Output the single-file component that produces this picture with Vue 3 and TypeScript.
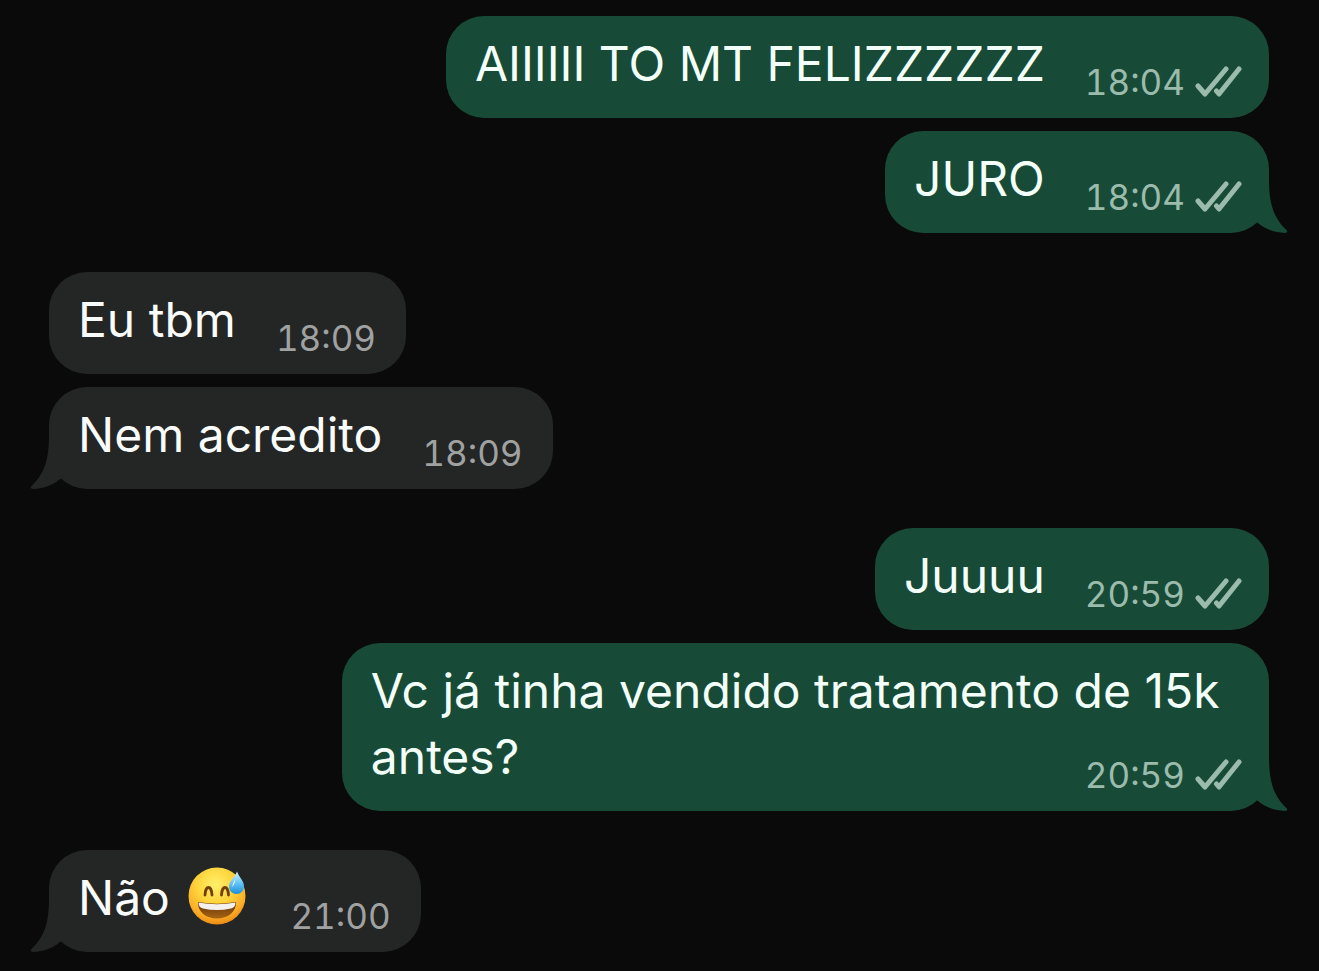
<script setup lang="ts">
interface Message {
  id: number
  text: string
  time: string
  outgoing: boolean
  tail: boolean
  emoji?: boolean
}

const groups: Message[][] = [
  [
    { id: 1, text: 'AIIIIII TO MT FELIZZZZZZ', time: '18:04', outgoing: true, tail: false },
    { id: 2, text: 'JURO', time: '18:04', outgoing: true, tail: true },
  ],
  [
    { id: 3, text: 'Eu tbm', time: '18:09', outgoing: false, tail: false },
    { id: 4, text: 'Nem acredito', time: '18:09', outgoing: false, tail: true },
  ],
  [
    { id: 5, text: 'Juuuu', time: '20:59', outgoing: true, tail: false },
    { id: 6, text: 'Vc já tinha vendido tratamento de 15k antes?', time: '20:59', outgoing: true, tail: true },
  ],
  [{ id: 7, text: 'Não', time: '21:00', outgoing: false, tail: true, emoji: true }],
]
</script>

<template>
  <main class="chat">
    <section v-for="(group, index) in groups" :key="index" class="group">
      <article
        v-for="message in group"
        :key="message.id"
        class="bubble"
        :class="message.outgoing ? 'outgoing' : 'incoming'"
      >
        <span class="text">{{ message.text }}</span>
        <template v-if="message.emoji">
          {{ ' ' }}
          <svg class="emoji" viewBox="0 0 58 58" role="img" aria-label="Rosto sorridente com gota de suor">
            <defs>
              <radialGradient id="face" cx="0.47" cy="0.3" r="0.72">
                <stop offset="0" stop-color="#fff06a" />
                <stop offset="0.45" stop-color="#ffd43c" />
                <stop offset="0.8" stop-color="#fbac25" />
                <stop offset="1" stop-color="#e98612" />
              </radialGradient>
              <linearGradient id="mouth" x1="0" y1="0" x2="0" y2="1">
                <stop offset="0" stop-color="#63320a" />
                <stop offset="1" stop-color="#a76412" />
              </linearGradient>
              <linearGradient id="drop" x1="0" y1="0" x2="0" y2="1">
                <stop offset="0" stop-color="#d6f4ff" />
                <stop offset="0.5" stop-color="#69c6f5" />
                <stop offset="1" stop-color="#168fdd" />
              </linearGradient>
            </defs>
            <circle cx="29" cy="29" r="28.5" fill="url(#face)" />
            <path d="M17 28C17.500 18 23.500 18 24 28" fill="none" stroke="#704008" stroke-width="2.800" stroke-linecap="round" />
            <path d="M33.500 28C34 18 40 18 40.500 28" fill="none" stroke="#704008" stroke-width="2.800" stroke-linecap="round" />
            <path d="M10 35Q29 38.500 48 35C48.500 45 40 51.500 29 51.500S9.500 45 10 35Z" fill="url(#mouth)" />
            <path d="M10.500 35.500Q29 39 47.500 35.500Q47.500 40.500 43 41.500Q29 44.500 15 41.500Q10.500 40.500 10.500 35.500Z" fill="#f4f0ee" />
            <path d="M49 4.500C47 10 41 14 41 19.500C41 24 44.500 27 48.500 27S56 24 56 19.500C56 14 51 10 49 4.500Z" fill="url(#drop)" />
            <path d="M47.500 11.500C46 15 44 17 44.500 20Q47 16.500 47.500 11.500Z" fill="#effbff" />
          </svg>
        </template>
        <span class="meta">
          <time>{{ message.time }}</time>
          <svg v-if="message.outgoing" class="ticks" viewBox="0 0 48 32" aria-hidden="true">
            <path d="M3 20L10 28L31 3M21.500 25L24 28L44 3" />
          </svg>
        </span>
        <svg v-if="message.tail" class="tail" viewBox="0 0 48 54" aria-hidden="true">
          <path d="M12 0H29C29 26 34 39 46.500 51Q48.500 53.500 45 54C34 53.500 25 50 18 44L12 40Z" />
        </svg>
      </article>
    </section>
  </main>
</template>

<style>
body {
  margin: 0;
  background: #0a0a0a;
}
</style>

<style scoped>
.chat {
  display: flex;
  flex-direction: column;
  gap: 39px;
  box-sizing: border-box;
  min-height: 100vh;
  padding: 16px 50px 19px 49px;
  background: #0a0a0a;
  font-family: Inter, "Liberation Sans", sans-serif;
}

.group {
  display: flex;
  flex-direction: column;
  gap: 13px;
}

.bubble {
  position: relative;
  display: flow-root;
  box-sizing: border-box;
  max-width: 76%;
  padding: 15px 30px 14px 29px;
  border-radius: 38px;
  font-size: 48px;
  line-height: 66px;
}

.outgoing {
  align-self: flex-end;
  padding-right: 26px;
  background: #184b37;
  color: #f3fff9;
}

.incoming {
  align-self: flex-start;
  background: #242626;
  color: #fafcfb;
}

.meta {
  float: right;
  display: flex;
  align-items: center;
  gap: 10px;
  margin: 29px 0 0 40px;
  font-size: 35px;
  font-variant-numeric: tabular-nums;
  line-height: 44px;
}

.outgoing .meta {
  color: #9bbcac;
}

.incoming .meta {
  color: #a0a1a1;
}

.ticks {
  width: 48px;
  height: 32px;
  fill: none;
  stroke: currentColor;
  stroke-width: 5;
  stroke-linecap: round;
  stroke-linejoin: round;
}

.emoji {
  width: 58px;
  height: 58px;
  margin: 0 4px 0 5px;
  vertical-align: -10px;
}

.tail {
  position: absolute;
  bottom: 0;
  width: 48px;
  height: 54px;
}

.outgoing .tail {
  right: -19px;
  fill: #184b37;
}

.incoming .tail {
  left: -19px;
  fill: #242626;
  transform: scaleX(-1);
}
</style>
